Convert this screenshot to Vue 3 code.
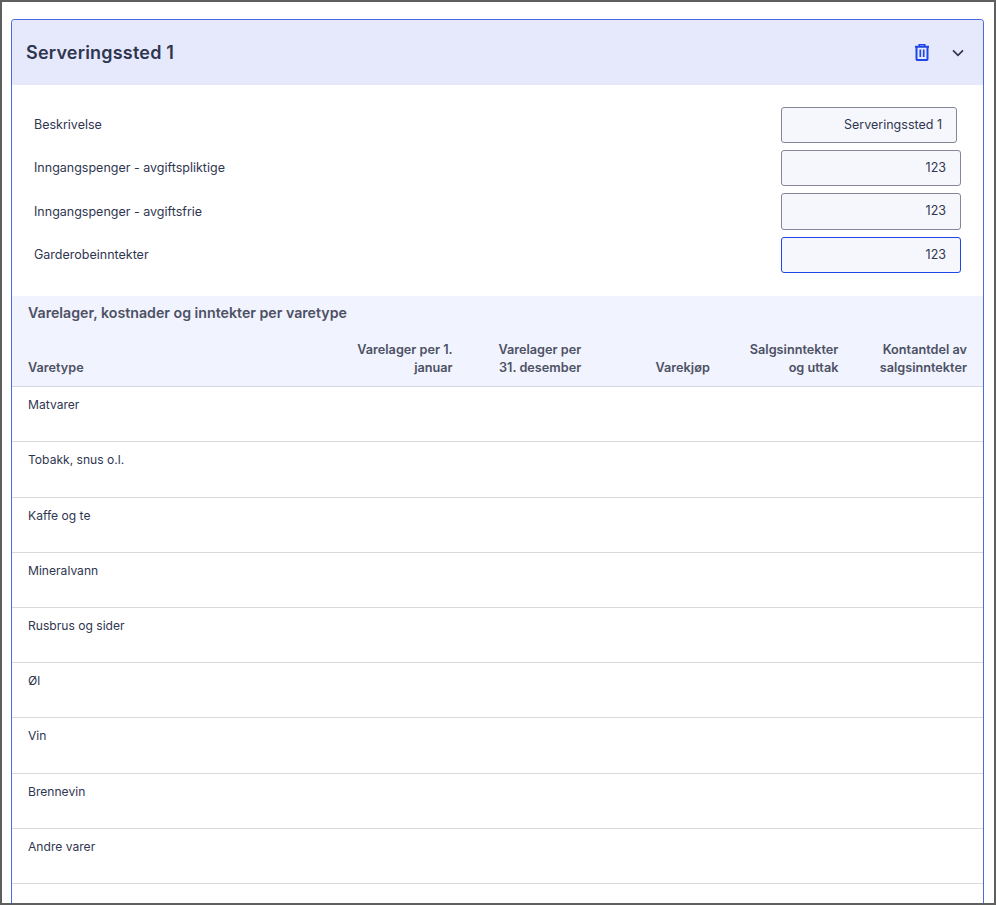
<script setup>
const fields = [
  { label: 'Beskrivelse', value: 'Serveringssted 1', short: true },
  { label: 'Inngangspenger - avgiftspliktige', value: '123' },
  { label: 'Inngangspenger - avgiftsfrie', value: '123' },
  { label: 'Garderobeinntekter', value: '123', focus: true },
]
const cols = [
  ['Varelager per 1.', 'januar'],
  ['Varelager per', '31. desember'],
  ['Varekjøp'],
  ['Salgsinntekter', 'og uttak'],
  ['Kontantdel av', 'salgsinntekter'],
]
const rows = ['Matvarer', 'Tobakk, snus o.l.', 'Kaffe og te', 'Mineralvann', 'Rusbrus og sider', 'Øl', 'Vin', 'Brennevin', 'Andre varer', '']
</script>

<template>
  <div class="frame">
    <section class="card">
      <header class="head">
        <h2>Serveringssted 1</h2>
        <div class="actions">
          <svg class="trash" width="14" height="17" viewBox="0 0 14 17" fill="none" stroke="#1f45e6" stroke-width="2">
            <path d="M0 2.7h14" />
            <path d="M4.2 2.2V.8h5.6v1.4" stroke-width="1.5" />
            <path d="M1.5 2.7v12.4c0 .6.4 1 1 1h9c.6 0 1-.4 1-1V2.7" />
            <path d="M5.3 5.5v7.6M8.7 5.5v7.6" stroke-width="1.7" />
          </svg>
          <svg class="chev" width="12" height="8" viewBox="0 0 12 8" fill="none" stroke="#2f3650" stroke-width="1.7">
            <path d="M1 1.4l5 5 5-5" />
          </svg>
        </div>
      </header>

      <div class="fields">
        <div v-for="f in fields" :key="f.label" class="field">
          <span class="label">{{ f.label }}</span>
          <div class="input" :class="{ short: f.short, focus: f.focus }">{{ f.value }}</div>
        </div>
      </div>

      <div class="band">
        <h3>Varelager, kostnader og inntekter per varetype</h3>
        <div class="grid thead">
          <div class="th first">Varetype</div>
          <div v-for="c in cols" :key="c[0]" class="th">
            <span v-for="l in c" :key="l" class="line">{{ l }}</span>
          </div>
        </div>
      </div>

      <div v-for="(r, i) in rows" :key="i" class="row">{{ r }}</div>
    </section>
  </div>
</template>

<style>
html, body { margin: 0; background: #fff; }
</style>

<style scoped>
.frame {
  box-sizing: border-box;
  width: 996px;
  height: 905px;
  overflow: hidden;
  border: 2px solid #5f5f5f;
  padding: 17px 10px 0 9px;
  background: #fff;
  font-family: Inter, "Noto Sans", sans-serif;
  color: #2f3650;
}
.card {
  border: 1px solid #4a6be0;
  border-bottom: 0;
  border-radius: 4px 4px 0 0;
  height: 900px;
  overflow: hidden;
}
.head {
  height: 65px;
  background: #e6e9fc;
  display: flex;
  align-items: center;
  justify-content: space-between;
  padding: 0 19px 0 14px;
}
h2 {
  margin: 0;
  font-size: 18px;
  font-weight: 600;
  letter-spacing: 0.2px;
  line-height: 24px;
  color: #2f3650;
}
.actions { display: flex; align-items: center; gap: 23px; }
.trash, .chev { display: block; }
.fields {
  padding: 21.8px 22px 23.27px;
  display: flex;
  flex-direction: column;
  gap: 7px;
}
.field {
  display: flex;
  align-items: center;
  justify-content: space-between;
}
.label { font-size: 12.5px; line-height: 18px; color: #2f3650; }
.input {
  box-sizing: border-box;
  width: 180px;
  height: 36.3px;
  border: 1px solid #85869a;
  border-radius: 3px;
  background: #f6f7fc;
  font-size: 12.5px;
  line-height: 34px;
  text-align: right;
  padding: 0 14px;
}
.input.short { width: 176px; margin-right: 4px; }
.input.focus { border-color: #1f45e6; }
.band { background: #f1f3fe; border-bottom: 1px solid #d4d6e2; }
h3 {
  margin: 0;
  padding: 8px 16px 0;
  font-size: 14.2px;
  font-weight: 600;
  line-height: 18px;
  color: #4d5164;
}
.grid {
  display: grid;
  grid-template-columns: 1fr repeat(5, 128.6px);
}
.thead { margin-top: 19px; padding-bottom: 9px; }
.th {
  align-self: end;
  font-size: 12.7px;
  font-weight: 600;
  line-height: 18px;
  color: #4d5164;
  text-align: right;
  padding-right: 16px;
}
.th.first { text-align: left; padding-left: 16px; }
.line { display: block; }
.row {
  box-sizing: border-box;
  height: 55.2px;
  border-bottom: 1px solid #d9d9d9;
  padding: 9px 16px 0;
  font-size: 12.1px;
  line-height: 18px;
  color: #2f3650;
}
</style>
